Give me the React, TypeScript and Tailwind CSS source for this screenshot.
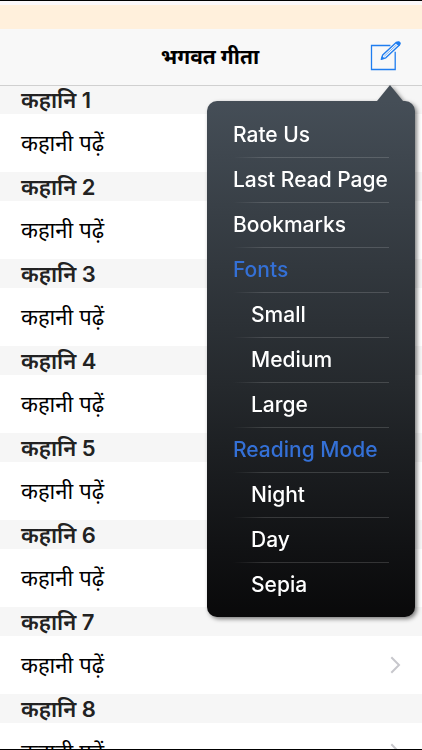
import { useState } from "react";
import { clsx } from "clsx";

const STORIES = [1, 2, 3, 4, 5, 6, 7, 8];

type MenuEntry = {
  label: string;
  kind: "action" | "heading" | "option";
};

const MENU: MenuEntry[] = [
  { label: "Rate Us", kind: "action" },
  { label: "Last Read Page", kind: "action" },
  { label: "Bookmarks", kind: "action" },
  { label: "Fonts", kind: "heading" },
  { label: "Small", kind: "option" },
  { label: "Medium", kind: "option" },
  { label: "Large", kind: "option" },
  { label: "Reading Mode", kind: "heading" },
  { label: "Night", kind: "option" },
  { label: "Day", kind: "option" },
  { label: "Sepia", kind: "option" },
];

function ComposeIcon() {
  return (
    <svg width="32" height="32" viewBox="0 0 32 32" fill="none" stroke="#1f7df0" aria-hidden="true">
      <path d="M20.4 4.5H1.5V28.5H25.2V10.8" strokeWidth="1.3" />
      <path d="M11.4 18.2L12.7 13.9L26.4 1.2L29.4 4.1L15.8 16.8Z" strokeWidth="1.4" strokeLinejoin="round" fill="#f8f8f8" />
      <path d="M14.3 15.2L26.8 3.6" strokeWidth="0.6" />
      <path d="M26 2L27.2 0.9Q28.5 -0.1 29.8 1.1Q31 2.4 30 3.7L28.8 4.8Z" fill="#1f7df0" strokeWidth="0.8" />
      <path d="M11.2 18.5L12.1 15.4L14.3 17.5Z" fill="#1f7df0" strokeWidth="0.6" />
    </svg>
  );
}

function Chevron() {
  return (
    <svg width="11" height="18" viewBox="0 0 11 18" fill="none" stroke="#c7c7cc" strokeWidth="2" aria-hidden="true">
      <path d="M1.3 1.2L9 9L1.3 16.8" />
    </svg>
  );
}

function OptionsMenu() {
  return (
    <nav
      aria-label="Options"
      className="absolute top-full right-[7px] z-10 w-52 drop-shadow-[2px_2px_2px_rgba(0,0,0,0.5)]"
    >
      <svg className="mr-3 ml-auto block" width="26" height="16" viewBox="0 0 26 16" aria-hidden="true">
        <path d="M0 16L13 0L26 16Z" fill="#454e57" />
      </svg>
      <ul className="rounded-[10px] bg-linear-to-b from-[#454e57] via-[#25292d] via-55% to-[#09090a] px-[26px] pt-3 pb-2.5">
        {MENU.map((entry, index) => (
          <li key={entry.label}>
            {index > 0 && <div className="h-px bg-linear-to-r from-white/0 via-white/15 via-20% to-white/15" />}
            {entry.kind === "heading" ? (
              <h2 className="flex h-11 items-center text-[21px] font-medium text-[#3470d6]">{entry.label}</h2>
            ) : (
              <button
                type="button"
                className={clsx(
                  "flex h-11 w-full items-center text-[21px] font-medium whitespace-nowrap text-white",
                  entry.kind === "option" && "pl-[18px]"
                )}
              >
                {entry.label}
              </button>
            )}
          </li>
        ))}
      </ul>
    </nav>
  );
}

export default function App() {
  const [menuOpen, setMenuOpen] = useState(true);

  return (
    <div className="flex h-screen flex-col overflow-hidden border-y border-black bg-white font-['Inter','Noto_Sans_Devanagari','Noto_Sans',sans-serif] text-black">
      {/* Status strip */}
      <div className="h-7 shrink-0 border-t-4 border-[#fbf8f9] bg-[#fff0dc]" />

      <header className="relative z-10 -mb-px flex h-[57px] shrink-0 items-center border-b border-[#d0d0d0] bg-[#f8f8f8] px-5">
        <h1 className="flex-1 pl-[30px] text-center text-[21px] font-bold">भगवत गीता</h1>
        <button
          type="button"
          aria-label="Menu"
          aria-expanded={menuOpen}
          onClick={() => setMenuOpen(!menuOpen)}
        >
          <ComposeIcon />
        </button>
        {menuOpen && <OptionsMenu />}
      </header>

      <main className="min-h-0 flex-1 overflow-hidden">
        {STORIES.map((n) => (
          <section key={n}>
            <h2 className="flex h-[29px] items-center bg-[#f6f6f6] pt-0.5 pl-[21px] text-[22px] font-semibold text-[#222]">
              कहानि {n}
            </h2>
            <a href={`#story-${n}`} className="flex h-[58px] items-center justify-between px-[21px] text-[22px]">
              कहानी पढ़ें
              <Chevron />
            </a>
          </section>
        ))}
      </main>
    </div>
  );
}
